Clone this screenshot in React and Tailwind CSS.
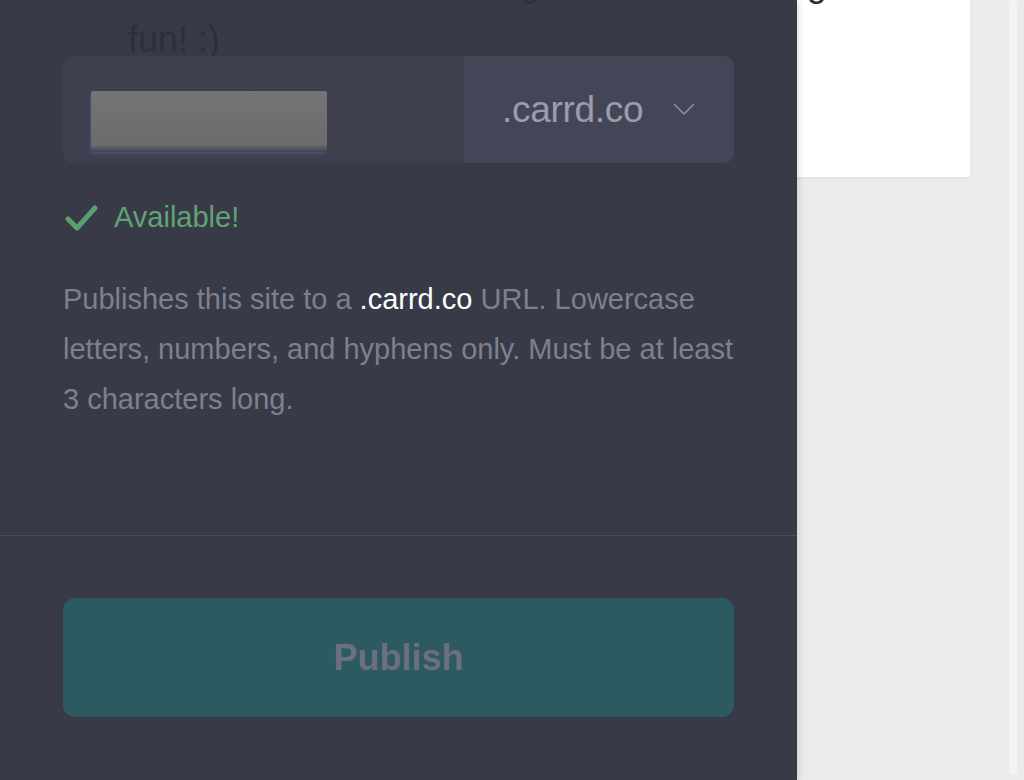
import React from 'react'

const font = { fontFamily: '"Liberation Sans", Arial, sans-serif' }

const Check = () => (
  <svg width="33" height="30" viewBox="0 0 33 30" fill="none">
    <path d="M3 16 L12 25 L30 5" stroke="#5b9f6f" strokeWidth="5" strokeLinecap="round" strokeLinejoin="round" />
  </svg>
)

const Chevron = () => (
  <svg width="22" height="13" viewBox="0 0 22 13" fill="none">
    <path d="M1.5 1.5 L11 11 L20.5 1.5" stroke="#8d8fa0" strokeWidth="1.6" strokeLinecap="round" strokeLinejoin="round" />
  </svg>
)

const PublishPanel = () => (
  <div className="w-[797px] shrink-0 h-full bg-[#383a48] flex flex-col relative z-10 shadow-[2px_0_6px_rgba(0,0,0,0.12)]" style={font}>
    {/* text behind, scrolled mostly out of view */}
    <div className="-mt-[44px] h-[100px] pl-[97px] text-[36px] leading-[56px] text-[#2d2f3c] whitespace-nowrap">
      <div className="flex items-center">
        <span className="w-[9px] h-[9px] rounded-[2px] bg-[#2d2f3c] inline-block translate-y-[16px]" />
        <span className="pl-[22px] tracking-[-0.5px]">I think it would make changes a lot more thing</span>
      </div>
      <div className="pl-[31px]">fun! :)</div>
    </div>

    <div className="px-[63px]">
      {/* domain input */}
      <div className="h-[107px] rounded-[10px] overflow-hidden flex">
        <div className="flex-1 bg-[#3e4050] pl-[28px] pt-[35px]">
          <div className="w-[236px] h-[61px] rounded-[2px] bg-[linear-gradient(180deg,#747474_0%,#6c6c6c_88%,#3f4252_100%)] shadow-[-1px_2px_2px_rgba(90,110,190,0.35)]" />
        </div>
        <div className="w-[270px] bg-[#444657] flex items-center pl-[38px] gap-[30px]">
          <span className="text-[37px] text-[#9b9dac] tracking-[-0.3px]">.carrd.co</span>
          <Chevron />
        </div>
      </div>

      {/* availability */}
      <div className="mt-[37px] h-[36px] flex items-center gap-[16px] pl-[2px]">
        <Check />
        <span className="text-[29px] text-[#5fa574]">Available!</span>
      </div>

      <p className="mt-[38px] text-[29px] leading-[50px] text-[#7e808e]">
        Publishes this site to a <span className="text-white">.carrd.co</span> URL. Lowercase letters, numbers, and hyphens only. Must be at least 3 characters long.
      </p>
    </div>

    <div className="mt-[111px] h-px bg-[#4a4c5b]" />

    <div className="px-[63px] mt-[62px]">
      <button className="w-full h-[119px] rounded-[12px] bg-[#2d5960] text-[36px] font-bold text-[#6c6f7f]" style={font}>
        Publish
      </button>
    </div>
  </div>
)

export default function App() {
  return (
    <div className="w-[1024px] h-[780px] overflow-hidden flex bg-[#ebebeb]">
      <PublishPanel />
      <div className="flex-1 flex">
        <div className="w-[173px] h-[177px] bg-white shadow-[0_1px_2px_rgba(0,0,0,0.05)]" />
        <div className="flex-1" />
        <div className="w-[8px] h-[775px] rounded-full bg-[#f4f4f4] mr-[7px]" />
      </div>
    </div>
  )
}
